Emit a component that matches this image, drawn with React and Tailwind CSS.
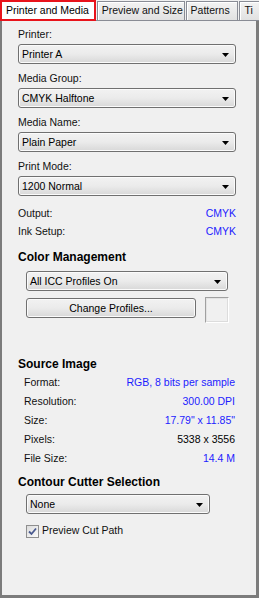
import { useState } from "react";

const font = { fontFamily: '"Liberation Sans", Arial, sans-serif' };

function Select({ value, className = "" }) {
  return (
    <div
      className={`relative flex items-center h-[20px] rounded-[3px] border border-[#707070] bg-gradient-to-b from-[#f2f2f2] via-[#ebebeb] to-[#d8d8d8] pl-[3px] text-[10.5px] text-black shadow-[inset_0_0_0_1px_#fbfbfb] ${className}`}
    >
      <span className="leading-[18px]">{value}</span>
      <svg
        className="absolute right-[6px] top-[8px]"
        width="7"
        height="4"
        viewBox="0 0 7 4"
      >
        <path d="M0 0H7L3.5 4Z" fill="#000" />
      </svg>
    </div>
  );
}

function Field({ label, value }) {
  return (
    <div className="flex flex-col">
      <div className="h-[16px] leading-[16px] text-[10.5px]">{label}</div>
      <Select value={value} className="mt-[2px] w-[218px]" />
    </div>
  );
}

function InfoRow({ label, value, blue = true }) {
  return (
    <div className="flex justify-between h-[19px] leading-[19px] text-[10.5px] pl-[6px] w-[217px]">
      <span>{label}</span>
      <span className={blue ? "text-[#1c1cff]" : "text-black"}>{value}</span>
    </div>
  );
}

export default function App() {
  const [preview, setPreview] = useState(true);

  return (
    <div
      className="w-[259px] h-[598px] flex flex-col bg-[#f0f0f0] text-[#111] overflow-hidden"
      style={font}
    >
      {/* Tabs */}
      <div className="flex items-end h-[21px] shrink-0 bg-[#f0f0f0] border-b border-[#898c95] text-[10.5px] whitespace-nowrap">
        <div className="h-[21px] w-[98px] border-2 border-[#e8131b] bg-white pl-[4px] leading-[16px] text-black relative z-10 -mb-px">
          Printer and Media
        </div>
        <div className="h-[19px] ml-[1px] w-[90px] border border-b-0 border-[#898c95] bg-gradient-to-b from-[#f3f3f3] to-[#e1e1e1] pl-[4px] leading-[17px] shadow-[inset_1px_1px_0_#fff]">
          Preview and Size
        </div>
        <div className="h-[19px] ml-[1px] w-[54px] border border-b-0 border-[#898c95] bg-gradient-to-b from-[#f3f3f3] to-[#e1e1e1] pl-[4px] leading-[17px] shadow-[inset_1px_1px_0_#fff]">
          Patterns
        </div>
        <div className="h-[19px] ml-[1px] w-[20px] border border-b-0 border-r-0 border-[#898c95] bg-gradient-to-b from-[#f3f3f3] to-[#e1e1e1] pl-[4px] leading-[17px] overflow-hidden shadow-[inset_1px_1px_0_#fff]">
          Ti
        </div>
      </div>

      {/* Panel */}
      <div className="flex-1 border-l-2 border-r-[3px] border-b-[3px] border-[#7c7c7c] bg-[#f0f0f0] pl-[16px] pt-[5px]">
        <div className="flex flex-col gap-[6px]">
          <Field label="Printer:" value="Printer A" />
          <Field label="Media Group:" value="CMYK Halftone" />
          <Field label="Media Name:" value="Plain Paper" />
          <Field label="Print Mode:" value="1200 Normal" />
        </div>

        <div className="mt-[8px] w-[218px] text-[10.5px]">
          <div className="flex justify-between h-[18px] leading-[18px]">
            <span>Output:</span>
            <span className="text-[#1c1cff]">CMYK</span>
          </div>
          <div className="flex justify-between h-[18px] leading-[18px]">
            <span>Ink Setup:</span>
            <span className="text-[#1c1cff]">CMYK</span>
          </div>
        </div>

        <div className="mt-[8px] h-[18px] leading-[18px] text-[12px] font-bold text-black">
          Color Management
        </div>
        <div className="pl-[8px]">
          <Select value="All ICC Profiles On" className="mt-[5px] w-[202px] h-[19px]" />
          <div className="flex items-start mt-[6px]">
            <button className="mt-[1px] w-[170px] h-[20px] rounded-[3px] border border-[#707070] bg-gradient-to-b from-[#f2f2f2] via-[#ebebeb] to-[#d8d8d8] text-[10.5px] text-black leading-[18px] shadow-[inset_0_0_0_1px_#fbfbfb]">
              Change Profiles...
            </button>
            <div className="ml-[9px] w-[24px] h-[26px] border border-t-[#a0a0a0] border-l-[#a0a0a0] border-b-white border-r-white shadow-[inset_1px_1px_0_#e3e3e3,inset_-1px_-1px_0_#dcdcdc] bg-[#f0f0f0]" />
          </div>
        </div>

        <div className="mt-[32px] h-[18px] leading-[18px] text-[12px] font-bold text-black">
          Source Image
        </div>
        <div className="flex flex-col">
          <InfoRow label="Format:" value="RGB, 8 bits per sample" />
          <InfoRow label="Resolution:" value="300.00 DPI" />
          <InfoRow label="Size:" value={'17.79" x 11.85"'} />
          <InfoRow label="Pixels:" value="5338 x 3556" blue={false} />
          <InfoRow label="File Size:" value="14.4 M" />
        </div>

        <div className="mt-[5px] h-[18px] leading-[18px] text-[12px] font-bold text-black">
          Contour Cutter Selection
        </div>
        <div className="pl-[8px]">
          <Select value="None" className="mt-[3px] w-[184px]" />
          <label className="mt-[9px] flex items-center h-[16px] text-[10.5px] cursor-default">
            <span
              onClick={() => setPreview(!preview)}
              className="w-[13px] h-[13px] border border-[#8f8f8f] bg-gradient-to-br from-[#dcdcdc] to-[#fbfbfb] flex items-center justify-center"
            >
              {preview && (
                <svg width="9" height="9" viewBox="0 0 9 9">
                  <path
                    d="M1 4.5L3.5 7L8 1.5"
                    fill="none"
                    stroke="#4a5a8f"
                    strokeWidth="1.8"
                  />
                </svg>
              )}
            </span>
            <span className="ml-[3px]">Preview Cut Path</span>
          </label>
        </div>
      </div>
    </div>
  );
}
